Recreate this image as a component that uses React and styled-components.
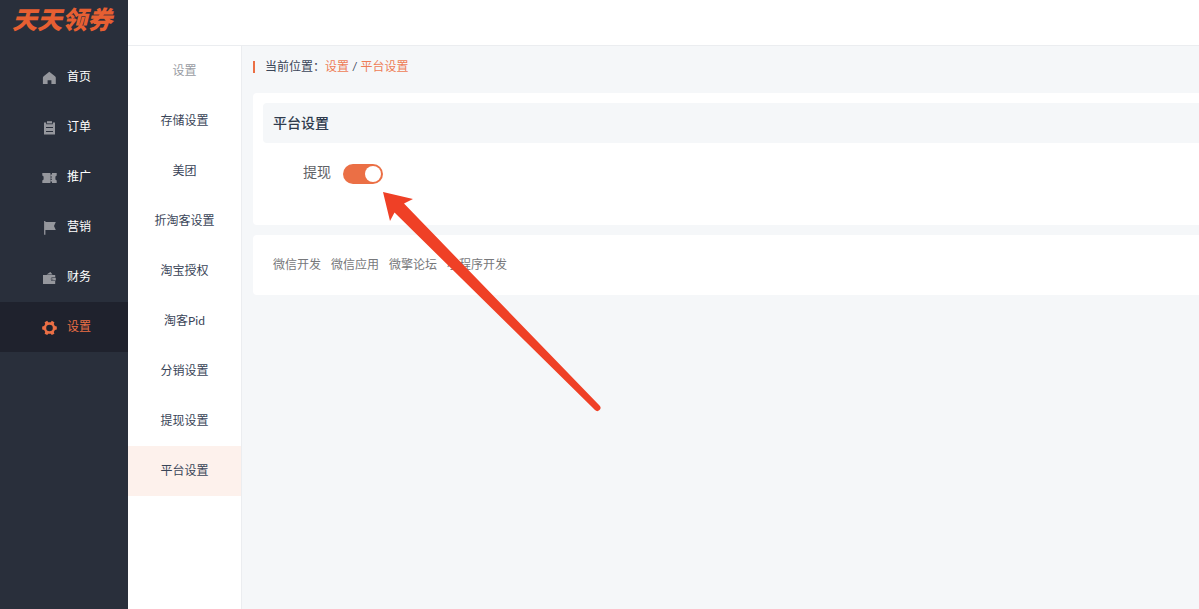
import React, { useState } from 'react'
import styled, { createGlobalStyle } from 'styled-components'

const GlobalStyle = createGlobalStyle`
  * {
    box-sizing: border-box;
  }
  body {
    margin: 0;
    background-color: #f5f7f9;
    color: #3a4558;
    font-family: Lato, "Noto Sans CJK SC", sans-serif;
    font-size: 12px;
    line-height: 20px;
  }
  a {
    color: inherit;
    text-decoration: none;
  }
`

const HomeIcon = () => (
  <Icon viewBox="0 0 16 16">
    <path d="M8.3 2.8 L14 7.2 Q14.8 7.9 14.8 8.8 V15 H10.4 V11.2 H6.6 V15 H1.9 V8.8 Q1.9 7.9 2.7 7.2 Z" />
  </Icon>
)

const OrderIcon = () => (
  <Icon viewBox="0 0 16 16">
    <path d="M6 2.2 H11 V4.4 H6 Z" />
    <path
      fillRule="evenodd"
      d="M3 3.6 H5.2 V5.2 H11.8 V3.6 H14 V15.6 H3 Z M5 8 V9 H12 V8 Z M5 12 V13 H12 V12 Z"
    />
  </Icon>
)

const TicketIcon = () => (
  <Icon viewBox="0 0 16 16">
    <path d="M1.3 4 H9.4 V14 H1.3 V11.6 L2.6 10.4 V7.6 L1.3 6.4 Z" />
    <path d="M11 4 H15.7 V6.4 L14.4 7.6 V10.4 L15.7 11.6 V14 H11 Z" />
    <path d="M9.4 5.4 H11 V7.4 H9.4 Z M9.4 8.4 H11 V9.8 H9.4 Z M9.4 10.8 H11 V12.6 H9.4 Z" />
  </Icon>
)

const FlagIcon = () => (
  <Icon viewBox="0 0 16 16">
    <path d="M3.1 2 H4.4 V15.8 H3.1 Z M4.4 3 H14.8 L13 7 L14.8 11 H4.4 Z" />
  </Icon>
)

const WalletIcon = () => (
  <Icon viewBox="0 0 16 16">
    <path d="M5.6 5.4 L9.4 3 L11.6 5.4 Z" />
    <path d="M2 6 H14.2 V8.2 H11.6 A1.9 1.9 0 0 0 11.6 12 H14.2 V15 H2 Z" />
    <path fillRule="evenodd" d="M11.6 8.8 H14.8 V11.4 H11.6 A1.3 1.3 0 0 1 11.6 8.8 Z M11.3 9.7 V10.6 H12.2 V9.7 Z" />
  </Icon>
)

const GearIcon = () => (
  <Icon viewBox="0 0 16 16">
    <path
      fillRule="evenodd"
      d="M6.2 1.8 L7.2 3.3 H9.8 L10.8 1.8 L13.4 3.3 L12.8 5.1 L13.9 6.9 L15.8 7.4 V10.6 L13.9 11.1 L12.8 12.9 L13.4 14.7 L10.8 16 L9.8 14.7 H7.2 L6.2 16 L3.6 14.7 L4.2 12.9 L3.1 11.1 L1.2 10.6 V7.4 L3.1 6.9 L4.2 5.1 L3.6 3.3 Z M8.5 5.7 A3.3 3.3 0 1 0 8.5 12.3 A3.3 3.3 0 1 0 8.5 5.7 Z"
    />
  </Icon>
)

const menus = [
  { name: '首页', icon: <HomeIcon /> },
  { name: '订单', icon: <OrderIcon /> },
  { name: '推广', icon: <TicketIcon /> },
  { name: '营销', icon: <FlagIcon /> },
  { name: '财务', icon: <WalletIcon /> },
  { name: '设置', icon: <GearIcon />, active: true },
]

const subMenus = ['存储设置', '美团', '折淘客设置', '淘宝授权', '淘客Pid', '分销设置', '提现设置', '平台设置']

const links = ['微信开发', '微信应用', '微擎论坛', '小程序开发']

function App() {
  const [withdraw, setWithdraw] = useState(true)

  return (
    <Layout>
      <GlobalStyle />
      <Sidebar>
        <Logo>天天领券</Logo>
        <nav>
          {menus.map((item) => (
            <MenuItem href="#" key={item.name} $active={item.active}>
              {item.icon}
              <span>{item.name}</span>
            </MenuItem>
          ))}
        </nav>
      </Sidebar>
      <Page>
        <TopBar />
        <Body>
          <SubMenu>
            <SubTitle>设置</SubTitle>
            {subMenus.map((name) => (
              <SubItem href="#" key={name} $active={name === '平台设置'}>{name}</SubItem>
            ))}
          </SubMenu>
          <Content>
            <Breadcrumb>
              <span>当前位置：</span>
              <Crumb href="#">设置</Crumb>
              <Slash>/</Slash>
              <Crumb href="#">平台设置</Crumb>
            </Breadcrumb>
            <Card>
              <CardTitle>平台设置</CardTitle>
              <FormRow>
                <Label htmlFor="withdraw">提现</Label>
                <SwitchBox>
                  <Switch
                    id="withdraw"
                    type="checkbox"
                    role="switch"
                    checked={withdraw}
                    onChange={(e) => setWithdraw(e.target.checked)}
                  />
                  <Arrow viewBox="0 0 218 220">
                    <path d="M0 0 L30 7 L21 11.5 L216.5 213.5 A3 3 0 0 1 212 218 L11.5 20.5 L7 29 Z" />
                  </Arrow>
                </SwitchBox>
              </FormRow>
            </Card>
            <Footer>
              {links.map((name) => (
                <a href="#" key={name}>{name}</a>
              ))}
            </Footer>
          </Content>
        </Body>
      </Page>
    </Layout>
  )
}

export default App


const Layout = styled.div`
  display: flex;
  min-height: 100vh;
`

const Sidebar = styled.aside`
  flex: none;
  width: 128px;
  background-color: #292f3b;
`

const Logo = styled.h1`
  height: 52px;
  margin: 0;
  padding-right: 4px;
  color: #e65f32;
  font-size: 25px;
  font-weight: 900;
  font-style: italic;
  line-height: 38px;
  text-align: center;
`

const Icon = styled.svg`
  flex: none;
  width: 16px;
  height: 16px;
  fill: currentColor;
`

const MenuItem = styled.a`
  display: flex;
  align-items: center;
  gap: 10px;
  height: 50px;
  padding-left: 41px;
  background-color: ${(props) => (props.$active ? '#1f222d' : 'transparent')};

  span {
    color: ${(props) => (props.$active ? '#eb6f45' : '#fff')};
    line-height: 50px;
  }
  svg {
    color: ${(props) => (props.$active ? '#eb6f45' : '#95979d')};
  }
`

const Page = styled.div`
  display: flex;
  flex: 1;
  flex-direction: column;
  min-width: 0;
`

const TopBar = styled.header`
  height: 46px;
  background-color: #fff;
  border-bottom: 1px solid #ebedf0;
`

const Body = styled.div`
  display: flex;
  flex: 1;
`

const SubMenu = styled.nav`
  flex: none;
  width: 114px;
  background-color: #fff;
  border-right: 1px solid #ebedf0;
  text-align: center;
  line-height: 50px;
`

const SubTitle = styled.div`
  color: #999ca3;
`

const SubItem = styled.a`
  display: block;
  background-color: ${(props) => (props.$active ? '#fdf1ec' : 'transparent')};
`

const Content = styled.main`
  flex: 1;
  min-width: 0;
  padding-left: 11px;
`

const Breadcrumb = styled.div`
  display: flex;
  align-items: center;
  height: 47px;
  padding-bottom: 5px;

  &::before {
    content: '';
    width: 2px;
    height: 12px;
    margin-right: 10px;
    background-color: #eb6f45;
  }
`

const Crumb = styled.a`
  color: #ee7c56;
`

const Slash = styled.span`
  margin: 0 3px;
`

const Card = styled.section`
  padding: 10px 0 40px 10px;
  margin-bottom: 10px;
  background-color: #fff;
  border-radius: 4px 0 0 4px;
`

const CardTitle = styled.h2`
  margin: 0 0 20px;
  padding-left: 10px;
  background-color: #f5f7f9;
  border-radius: 4px 0 0 4px;
  color: #2f3b4d;
  font-size: 14px;
  font-weight: 500;
  line-height: 40px;
`

const FormRow = styled.div`
  display: flex;
  align-items: center;
  gap: 12px;
  height: 22px;
  padding-left: 40px;
`

const Label = styled.label`
  align-self: flex-start;
  color: #606266;
  font-size: 14px;
  line-height: 18px;
`

const SwitchBox = styled.div`
  position: relative;
  display: flex;
`

const Switch = styled.input`
  appearance: none;
  display: flex;
  align-items: center;
  justify-content: ${(props) => (props.checked ? 'flex-end' : 'flex-start')};
  width: 40px;
  height: 20px;
  margin: 0;
  padding: 2px;
  background-color: ${(props) => (props.checked ? '#eb6f45' : '#dcdfe6')};
  border-radius: 10px;
  cursor: pointer;

  &::before {
    content: '';
    width: 16px;
    height: 16px;
    background-color: #fff;
    border-radius: 50%;
  }
`

const Arrow = styled.svg`
  position: absolute;
  top: 28px;
  left: 40px;
  width: 218px;
  height: 220px;
  fill: #ef4026;
  pointer-events: none;
`

const Footer = styled.footer`
  display: flex;
  gap: 10px;
  padding: 20px;
  background-color: #fff;
  border-radius: 4px 0 0 4px;
  color: #77787b;
`
